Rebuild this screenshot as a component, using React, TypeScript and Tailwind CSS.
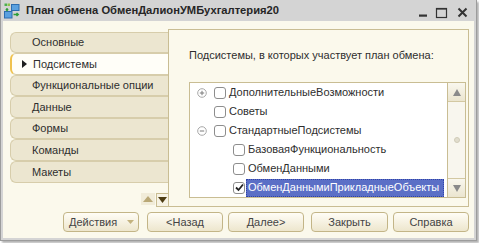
import React from "react";

function Expander({ open }: { open: boolean }) {
  return (
    <svg width="10" height="10" viewBox="0 0 10 10">
      <circle cx="5" cy="5" r="4.3" fill="#fff" stroke="#a8a8a8" strokeWidth="1" />
      <line x1="2.8" y1="5" x2="7.2" y2="5" stroke="#7a7a7a" strokeWidth="1" />
      {!open && <line x1="5" y1="2.8" x2="5" y2="7.2" stroke="#7a7a7a" strokeWidth="1" />}
    </svg>
  );
}

function Check({ checked }: { checked?: boolean }) {
  return (
    <div className="w-[12px] h-[12px] rounded-[3px] border border-[#8d8d8d] bg-white flex items-center justify-center shrink-0">
      {checked && (
        <svg width="9" height="9" viewBox="0 0 9 9">
          <path d="M1 4.5 L3.5 7 L8 1.5" fill="none" stroke="#222" strokeWidth="1.8" />
        </svg>
      )}
    </div>
  );
}

const tabs = [
  { label: "Основные", h: "h-[21px]" },
  { label: "Подсистемы", h: "h-[22px]", sel: true },
  { label: "Функциональные опции", h: "h-[21px]" },
  { label: "Данные", h: "h-[22px]" },
  { label: "Формы", h: "h-[21px]" },
  { label: "Команды", h: "h-[22px]" },
  { label: "Макеты", h: "h-[22px]" },
];

export default function App() {
  return (
    <div className="w-[479px] h-[243px] bg-white font-['Liberation_Sans',Arial,sans-serif] text-[11px] text-[#2e2e2e]">
      <div className="w-[477px] h-[241px] bg-[#d4d4d4] border-x border-b border-[#9c9c9c] flex flex-col shadow-[2px_2px_2px_rgba(0,0,0,0.3)]">
        {/* Title bar */}
        <div className="h-[21px] flex items-center shrink-0 relative">
          <svg width="16" height="16" viewBox="0 0 16 16" className="ml-[3px] mt-[1px]">
            <rect x="0.5" y="0.5" width="2.5" height="2.5" fill="#4caf50" />
            <rect x="3.5" y="0.5" width="2.5" height="2.5" fill="#8bc34a" />
            <rect x="7.5" y="1.5" width="7.5" height="6" fill="#5aa0e0" stroke="#2d6db0" strokeWidth="1" />
            <rect x="0.5" y="8.5" width="7.5" height="6.5" fill="#5aa0e0" stroke="#2d6db0" strokeWidth="1" />
            <path d="M3 5 L3 7.5 M1.8 6.3 L3 7.6 L4.2 6.3" stroke="#2e9d3a" strokeWidth="1.3" fill="none" />
            <path d="M9.5 11.5 L14 11.5 M12.5 10 L14.2 11.5 L12.5 13" stroke="#2e9d3a" strokeWidth="1.5" fill="none" />
          </svg>
          <div className="ml-[6px] font-bold text-[11.2px] text-[#262626] leading-none">
            План обмена ОбменДалионУМБухгалтерия20
          </div>
          <svg width="60" height="21" viewBox="0 0 60 21" className="ml-auto mr-[3px]">
            <rect x="6" y="14.5" width="8" height="2.2" fill="#333" />
            <rect x="23.5" y="8.5" width="10" height="9" fill="none" stroke="#333" strokeWidth="1.2" />
            <line x1="23.5" y1="8.8" x2="33.5" y2="8.8" stroke="#333" strokeWidth="1.6" />
            <path d="M45.5 8.5 L53.5 16.5 M53.5 8.5 L45.5 16.5" stroke="#333" strokeWidth="2" />
          </svg>
        </div>

        {/* Body */}
        <div className="flex-1 mx-[2px] mb-[2px] bg-[#fbf9ec] flex flex-col pt-[8px] pl-[7px] pr-[5px]">
          <div className="flex h-[178px]">
            {/* Tabs column */}
            <div className="w-[158px] flex flex-col pt-[3px] relative">
              {tabs.map((t) => (
                <div
                  key={t.label}
                  className={
                    t.sel
                      ? `${t.h} flex items-center rounded-l-[6px] border border-r-0 border-[#d7cdab] border-l-[2px] border-l-[#f0c24e] bg-[#fffef8] pl-[10px]`
                      : `${t.h} flex items-center rounded-l-[6px] border border-r-0 border-[#d7cdab] bg-[#ece6d0] pl-[21px]`
                  }
                >
                  {t.sel && (
                    <svg width="5" height="8" viewBox="0 0 5 8" className="mr-[6px]">
                      <path d="M0 0 L5 4 L0 8 Z" fill="#1e1e1e" />
                    </svg>
                  )}
                  <span className="leading-none whitespace-nowrap">{t.label}</span>
                </div>
              ))}
              <div className="absolute right-0 bottom-0 flex items-end">
                <div className="w-[14px] h-[12px] bg-[#f1ecd9] flex items-center justify-center mr-[1px] mb-[2px]">
                  <svg width="10" height="6" viewBox="0 0 10 6">
                    <path d="M0 6 L5 0 L10 6 Z" fill="#b9a876" />
                  </svg>
                </div>
                <div className="w-[12px] h-[14px] bg-[#f7f3e4] border border-[#c9bd93] border-r-0 flex items-center justify-center">
                  <svg width="9" height="6" viewBox="0 0 9 6">
                    <path d="M0 0 L9 0 L4.5 6 Z" fill="#4d3c12" />
                  </svg>
                </div>
              </div>
            </div>

            {/* Panel */}
            <div className="flex-1 border border-[#c9bd93] flex flex-col pl-[20px] pt-[18px]">
              <div className="h-[14px] leading-[14px]">Подсистемы, в которых участвует план обмена:</div>
              <div className="mt-[20px] w-[277px] h-[116px] border border-[#c9bd93] bg-white flex">
                <div className="flex-1 flex flex-col">
                  <div className="h-[19px] flex items-center pl-[7px]">
                    <Expander open={false} />
                    <div className="ml-[7px]"><Check /></div>
                    <span className="ml-[3px] leading-none">ДополнительныеВозможности</span>
                  </div>
                  <div className="h-[19px] flex items-center pl-[24px]">
                    <Check />
                    <span className="ml-[3px] leading-none">Советы</span>
                  </div>
                  <div className="h-[19px] flex items-center pl-[7px]">
                    <Expander open={true} />
                    <div className="ml-[7px]"><Check /></div>
                    <span className="ml-[3px] leading-none">СтандартныеПодсистемы</span>
                  </div>
                  <div className="h-[19px] flex items-center pl-[43px]">
                    <Check />
                    <span className="ml-[3px] leading-none">БазоваяФункциональность</span>
                  </div>
                  <div className="h-[19px] flex items-center pl-[43px]">
                    <Check />
                    <span className="ml-[3px] leading-none">ОбменДанными</span>
                  </div>
                  <div className="h-[19px] flex items-center pl-[43px]">
                    <Check checked />
                    <span className="ml-[1px] h-[18px] flex items-center pl-[1px] pr-[4px] bg-[#5b6fc6] text-white border border-dotted border-[#2f43a8] leading-none">
                      ОбменДаннымиПрикладныеОбъекты
                    </span>
                  </div>
                </div>
                {/* Scrollbar */}
                <div className="w-[18px] border-l border-[#c9bd93] bg-[#f8f6ee] flex flex-col">
                  <div className="h-[19px] bg-gradient-to-b from-[#f9f7ee] to-[#ebe5cf] border-b border-[#d3c8a2] flex items-center justify-center">
                    <svg width="8" height="7" viewBox="0 0 8 7">
                      <path d="M0 7 L4 0 L8 7 Z" fill="#8a8a8a" />
                    </svg>
                  </div>
                  <div className="flex-1 flex flex-col items-center justify-center">
                    <div className="w-[6px] h-[6px] rounded-full bg-[#e1ddcd] border border-[#d0cbb8]" />
                  </div>
                  <div className="h-[19px] bg-gradient-to-b from-[#f9f7ee] to-[#ebe5cf] border-t border-[#d3c8a2] flex items-center justify-center">
                    <svg width="8" height="7" viewBox="0 0 8 7">
                      <path d="M0 0 L8 0 L4 7 Z" fill="#8a8a8a" />
                    </svg>
                  </div>
                </div>
              </div>
            </div>
          </div>

          {/* Buttons */}
          <div className="flex mt-[5px] h-[20px] text-[#444]">
            <div className="ml-[53px] w-[76px] h-[20px] rounded-[4px] border border-[#c3b587] bg-gradient-to-b from-[#fffdf6] to-[#ede6cd] flex items-center pl-[5px]">
              <span className="leading-none">Действия</span>
              <svg width="7" height="4" viewBox="0 0 7 4" className="ml-[10px]">
                <path d="M0 0 L7 0 L3.5 4 Z" fill="#c3b27e" />
              </svg>
            </div>
            <div className="ml-[8px] w-[76px] h-[20px] rounded-[4px] border border-[#c3b587] bg-gradient-to-b from-[#fffdf6] to-[#ede6cd] flex items-center justify-center">
              <span className="leading-none">&lt;Назад</span>
            </div>
            <div className="ml-[5px] w-[76px] h-[20px] rounded-[4px] border border-[#c3b587] bg-gradient-to-b from-[#fffdf6] to-[#ede6cd] flex items-center justify-center">
              <span className="leading-none">Далее&gt;</span>
            </div>
            <div className="ml-[7px] w-[77px] h-[20px] rounded-[4px] border border-[#c3b587] bg-gradient-to-b from-[#fffdf6] to-[#ede6cd] flex items-center justify-center">
              <span className="leading-none">Закрыть</span>
            </div>
            <div className="ml-[5px] w-[76px] h-[20px] rounded-[4px] border border-[#c3b587] bg-gradient-to-b from-[#fffdf6] to-[#ede6cd] flex items-center justify-center">
              <span className="leading-none">Справка</span>
            </div>
          </div>
        </div>
      </div>
    </div>
  );
}
